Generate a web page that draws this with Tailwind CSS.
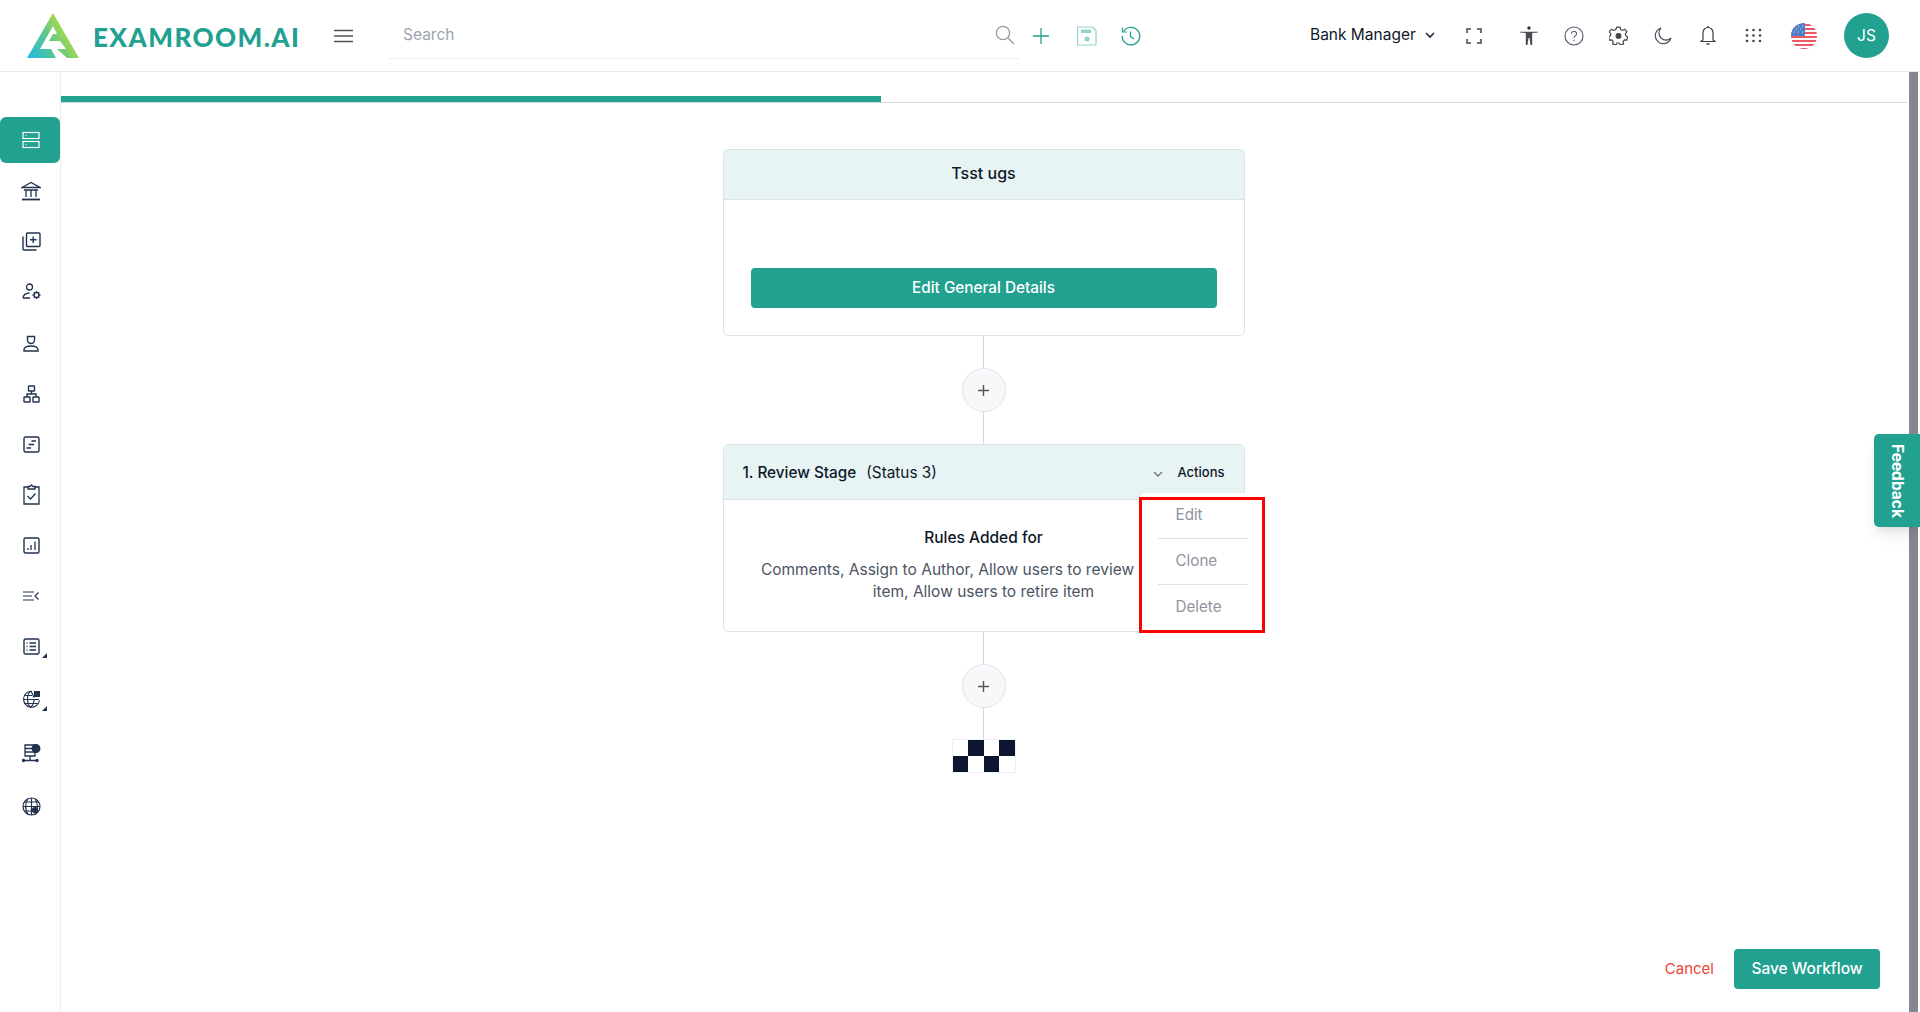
<!DOCTYPE html>
<html lang="en">
<head>
    <meta charset="UTF-8">
    <title>Workflow</title>
    <script src="https://cdn.jsdelivr.net/npm/@tailwindcss/browser@4"></script>
</head>
<body class="h-screen overflow-hidden flex flex-col bg-white font-['Inter',sans-serif] text-[#0f172a]">

    <!-- Header -->
    <header class="h-[72px] shrink-0 flex items-center pl-[27px] border-b border-[#ececec]">
        <svg class="w-[52px] h-[45px] shrink-0 -mt-[1px]" viewBox="0 0 52 45">
            <defs>
                <linearGradient id="logoGrad" x1="0" y1="1" x2="1" y2="0.45">
                    <stop offset="0" stop-color="#1fb6e6"/>
                    <stop offset="0.5" stop-color="#5cc98a"/>
                    <stop offset="1" stop-color="#cfe02a"/>
                </linearGradient>
            </defs>
            <path fill="url(#logoGrad)" d="M26 0 52 45H40L30 36H39L33 28H22L26 21H30L26 13 13 36H24L29 45H0Z"/>
        </svg>
        <span class="ml-[14px] mt-[2px] w-[206px] shrink-0 font-['Lato',sans-serif] font-black text-[26px] leading-none tracking-[1.45px] text-[#22a090] whitespace-nowrap">EXAMROOM.AI</span>
        <svg class="ml-[35px] w-[19px] h-[14px] shrink-0" viewBox="0 0 19 14" fill="none" stroke="#555" stroke-width="1.6"><path d="M0 1.5h19M0 7h19M0 12.5h19"/></svg>

        <div class="ml-[35px] w-[631px] h-[46px] shrink-0 flex items-center border-b border-[#eeeeee] pl-[15px] pr-[4px]">
            <input class="flex-1 min-w-0 text-[15.5px] outline-none placeholder:text-[#9ca3af]" placeholder="Search">
            <svg class="w-[20px] h-[20px] shrink-0 -mt-[1px]" viewBox="0 0 20 20" fill="none" stroke="#9a9aa2" stroke-width="1.3"><circle cx="8" cy="8" r="6.6"/><path d="M13 13l6 6"/></svg>
        </div>

        <svg class="ml-[14px] w-[16px] h-[16px] shrink-0" viewBox="0 0 16 16" fill="none" stroke="#22a090" stroke-width="1.3"><path d="M8 0v16M0 8h16"/></svg>
        <svg class="ml-[28px] w-[20px] h-[20px] shrink-0" viewBox="0 0 20 20" fill="none"><path d="M1.5 1h14l3.500 3.500v13.500a1 1 0 0 1-1 1h-16.500a1 1 0 0 1-1-1v-16a1 1 0 0 1 1-1z" stroke="#92d3ca" stroke-width="1.2"/><rect x="4" y="3.500" width="10" height="3.500" fill="#92d3ca"/><circle cx="10" cy="13" r="2.500" fill="#92d3ca"/></svg>
        <svg class="ml-[24px] w-[20px] h-[20px] shrink-0" viewBox="0 0 20 20" fill="none" stroke="#22a090" stroke-width="1.3"><path d="M2.500 5.500A8.800 8.800 0 1 1 1.200 10"/><path d="M1.500 1.500v4.500h4.500" stroke-width="1.2"/><path d="M9.500 5.500v5l3.500 2.500"/></svg>

        <span class="ml-[169px] -mt-[1px] w-[106px] shrink-0 text-[15.5px] whitespace-nowrap">Bank Manager</span>
        <svg class="ml-[9px] w-[10px] h-[7px] shrink-0" viewBox="0 0 10 7" fill="none" stroke="#1f2937" stroke-width="1.6"><path d="M1 1l4 4 4-4"/></svg>

        <svg class="ml-[31px] w-[16px] h-[16px] shrink-0" viewBox="0 0 16 16" fill="none" stroke="#444" stroke-width="1.5"><path d="M1 5V1h4M11 1h4v4M15 11v4h-4M5 15H1v-4"/></svg>
        <svg class="ml-[38px] w-[18px] h-[20px] shrink-0" viewBox="0 0 18 20"><circle cx="9" cy="2" r="1.700" fill="#333"/><path d="M0 5.700h18v.8l-5.800.6V19h-1.700l-1-7h-1l-1 7H5.800V7.100L0 6.500z" fill="#4a4a50"/></svg>
        <svg class="ml-[26px] w-[20px] h-[20px] shrink-0" viewBox="0 0 20 20" fill="none" stroke="#4b5563" stroke-width="1.100"><circle cx="10" cy="10" r="9"/><path d="M7.500 7.800a2.500 2.500 0 1 1 3.800 2.100c-.9.6-1.300 1-1.300 2.100"/><path d="M10 13.800v1.400"/></svg>
        <svg class="ml-[25px] w-[19px] h-[19px] shrink-0" viewBox="0 0 24 24" fill="none" stroke="#444" stroke-width="1.500"><path d="M10 1.500h4l.6 3 2.600 1.100 2.700-1.600 2.800 3.400-2 2.300.3 2.300 2.500 1.500-1 4.200-3-.2-1.700 2.100.6 3-4 1.500-1.700-2.600h-2.400l-1.700 2.600-4-1.500.6-3-1.700-2.100-3 .2-1-4.200 2.500-1.500.3-2.300-2-2.300 2.800-3.400 2.700 1.600 2.600-1.100z"/><circle cx="12" cy="12.500" r="3" fill="#444"/></svg>
        <svg class="ml-[26px] w-[18px] h-[18px] shrink-0" viewBox="0 0 18 18" fill="none" stroke="#4b5563" stroke-width="1.200"><path d="M7 1a8 8 0 1 0 10 10A7 7 0 0 1 7 1z"/></svg>
        <svg class="ml-[28px] w-[16px] h-[20px] shrink-0" viewBox="0 0 16 20" fill="none" stroke="#3f3f46" stroke-width="1.200"><path d="M8 1.500a5 5 0 0 1 5 5v7.500l2 1.500H1l2-1.500V6.500a5 5 0 0 1 5-5z"/><path d="M8 0v1.500M6.500 18h3" stroke-width="1.500"/></svg>
        <svg class="ml-[29px] w-[17px] h-[15px] shrink-0" viewBox="0 0 17 15" fill="#444"><circle cx="2" cy="2" r="1.300"/><circle cx="8.500" cy="2" r="1.300"/><circle cx="15" cy="2" r="1.300"/><circle cx="2" cy="7.500" r="1.300"/><circle cx="8.500" cy="7.500" r="1.300"/><circle cx="15" cy="7.500" r="1.300"/><circle cx="2" cy="13" r="1.300"/><circle cx="8.500" cy="13" r="1.300"/><circle cx="15" cy="13" r="1.300"/></svg>
        <svg class="ml-[29px] w-[26px] h-[26px] shrink-0" viewBox="0 0 26 26">
            <defs><clipPath id="flagClip"><circle cx="13" cy="13" r="13"/></clipPath></defs>
            <g clip-path="url(#flagClip)">
                <rect width="26" height="26" fill="#fff"/>
                <path d="M0 1h26v2H0zM0 5h26v2H0zM0 9h26v2H0zM0 13h26v2H0zM0 17h26v2H0zM0 21h26v2H0zM0 25h26v2H0z" fill="#ef5666"/>
                <rect width="14" height="13" fill="#4f7fc4"/>
            </g>
            <path d="M3 3h1M7 3h1M11 3h1M5 6h1M9 6h1M3 9h1M7 9h1M11 9h1" stroke="#dfe8f5" stroke-width="1"/>
        </svg>
        <div class="ml-[27px] w-[45px] h-[45px] shrink-0 rounded-full bg-[#22a090] text-white text-[15.5px] flex items-center justify-center">JS</div>
    </header>

    <div class="flex-1 min-h-0 flex relative">

        <!-- Sidebar -->
        <aside class="w-[61px] shrink-0 border-r border-[#ececec] pt-[45px] flex flex-col items-stretch text-[#22324f]">
            <div class="h-[46px] mb-[3px] pl-[2px] bg-[#22a090] rounded-[6px] flex items-center justify-center">
                <svg class="w-[18px] h-[18px]" viewBox="0 0 18 18" fill="none" stroke="#fff" stroke-width="1.200"><rect x="1" y="1.500" width="16" height="6"/><rect x="1" y="10.500" width="16" height="6"/><path d="M3.500 4.500h1M3.500 13.500h1"/></svg>
            </div>
            <div class="h-[50.6px] pl-[2px] flex items-center justify-center">
                <svg class="w-[20px] h-[20px]" viewBox="0 0 20 20" fill="none" stroke="currentColor" stroke-width="1.300"><path d="M1 6.500 10 1.500l9 5zM3 9h14M5 9v7M10 9v7M15 9v7"/><path d="M1 18.500h18" stroke-width="1.800"/></svg>
            </div>
            <div class="h-[50.6px] pl-[2px] flex items-center justify-center">
                <svg class="w-[19px] h-[19px]" viewBox="0 0 19 19" fill="none" stroke="currentColor" stroke-width="1.400"><rect x="4.500" y="1" width="13.500" height="13.500" rx="1"/><path d="M1 4.500V17a1 1 0 0 0 1 1h12.500M11.200 4.500v6.500M8 7.700h6.500"/></svg>
            </div>
            <div class="h-[50.6px] pl-[2px] flex items-center justify-center">
                <svg class="w-[19px] h-[18px]" viewBox="0 0 19 18" fill="none" stroke="currentColor" stroke-width="1.300"><circle cx="7.500" cy="4" r="3"/><path d="M1 15h7M1 15c0-3 3-5 6.500-5"/><circle cx="14.500" cy="12" r="2.400"/><path d="M14.500 8v1.600M14.500 14.400V16M18.500 12h-1.600M12.100 12h-1.600M11.700 9.200l1.100 1.100M16.200 13.700l1.100 1.100M17.300 9.200l-1.100 1.100M12.800 13.700l-1.100 1.100" stroke-width="1.400"/></svg>
            </div>
            <div class="h-[50.6px] pl-[2px] flex items-center justify-center">
                <svg class="w-[16px] h-[17px]" viewBox="0 0 16 17" fill="none" stroke="currentColor" stroke-width="1.400"><path d="M4.500 1.500h7v3.500a3.500 3.500 0 0 1-7 0z"/><path d="M1 16h14v-1c0-2.500-2.500-4-7-4s-7 1.500-7 4z"/></svg>
            </div>
            <div class="h-[50.6px] pl-[2px] flex items-center justify-center">
                <svg class="w-[17px] h-[18px]" viewBox="0 0 17 18" fill="none" stroke="currentColor" stroke-width="1.400"><rect x="5.500" y="1" width="6" height="5" rx=".6"/><rect x="1" y="12" width="6" height="5" rx=".6"/><rect x="10" y="12" width="6" height="5" rx=".6"/><path d="M8.500 6v3M4 12V9h9v3"/></svg>
            </div>
            <div class="h-[50.6px] pl-[2px] flex items-center justify-center">
                <svg class="w-[17px] h-[17px]" viewBox="0 0 17 17" fill="none" stroke="currentColor" stroke-width="1.400"><rect x="1" y="1" width="15" height="15" rx="1.500"/><path d="M8.500 5H13M5.500 8.500H11M3.500 12H8" stroke-width="1.300"/></svg>
            </div>
            <div class="h-[50.6px] pl-[2px] flex items-center justify-center">
                <svg class="w-[17px] h-[21px]" viewBox="0 0 17 21" fill="none" stroke="currentColor" stroke-width="1.300"><path d="M5 3H1v17h15V3h-4"/><path d="M5 5V2.500h2L8.500 1 10 2.500h2V5z"/><path d="M4.500 12l3 3 5-5.500"/></svg>
            </div>
            <div class="h-[50.6px] pl-[2px] flex items-center justify-center">
                <svg class="w-[17px] h-[17px]" viewBox="0 0 17 17" fill="none" stroke="currentColor" stroke-width="1.400"><rect x="1" y="1" width="15" height="15" rx="1.500"/><path d="M5 11v2M8 8v5M12 4.500V13" stroke-width="1.300"/></svg>
            </div>
            <div class="h-[50.6px] pl-[2px] flex items-center justify-center">
                <svg class="w-[16px] h-[10px]" viewBox="0 0 16 10" fill="none" stroke="currentColor" stroke-width="1.200"><path d="M0 1h11M0 5h9M0 9h11M15.500 1.500 12 5l3.500 3.500"/></svg>
            </div>
            <div class="h-[50.6px] pl-[2px] relative flex items-center justify-center">
                <svg class="w-[17px] h-[17px]" viewBox="0 0 17 17" fill="none" stroke="currentColor" stroke-width="1.400"><rect x="1" y="1" width="15" height="15" rx="1.500"/><path d="M6.500 5H13M6.500 8.500H13M6.500 12H13M3.500 5h1M3.500 8.500h1M3.500 12h1"/></svg>
                <span class="absolute left-[42px] top-[32px] w-0 h-0 border-l-[5px] border-l-transparent border-b-[5px] border-b-[#22324f]"></span>
            </div>
            <div class="h-[55px] pl-[2px] relative flex items-center justify-center">
                <svg class="w-[19px] h-[19px]" viewBox="0 0 19 19" fill="none" stroke="currentColor" stroke-width="1.100"><path d="M10 1.200a8 8 0 1 0 7.500 9"/><path d="M8.500 1.200c-4 4-4 12 0 16.500M8.500 1.200c2 2 3 4 3.300 6.500M8.500 17.700c2-2 3.500-4.500 3.700-8M1 9.500h16M2 5.500h8M2 13.500h14"/><rect x="12" y="1" width="6" height="6" fill="currentColor" stroke="none"/></svg>
                <span class="absolute left-[42px] top-[34px] w-0 h-0 border-l-[5px] border-l-transparent border-b-[5px] border-b-[#22324f]"></span>
            </div>
            <div class="h-[53px] pl-[2px] flex items-center justify-center">
                <svg class="w-[19px] h-[19px]" viewBox="0 0 19 19" fill="none" stroke="currentColor" stroke-width="1.300"><path d="M3 1h10v11H3zM3 4.500h10M3 8h10"/><circle cx="14" cy="4.500" r="3.800" fill="currentColor"/><path d="M8 12v4M1 16.500h14" /><circle cx="1.500" cy="16.500" r="1" fill="currentColor"/><circle cx="15" cy="16.500" r="1" fill="currentColor"/></svg>
            </div>
            <div class="h-[54px] pl-[2px] flex items-center justify-center">
                <svg class="w-[19px] h-[19px]" viewBox="0 0 19 19" fill="none" stroke="currentColor" stroke-width="1.200"><circle cx="9.500" cy="9.500" r="8.500"/><path d="M1 9.500h17M2.500 5h14M2.500 14h14M9.500 1v17M6 1.500c-3 5-3 11 0 16M13 1.500c3 5 3 11 0 16"/><circle cx="13" cy="13" r="2.500" fill="currentColor"/></svg>
            </div>
        </aside>

        <!-- Main -->
        <main class="flex-1 min-w-0 flex flex-col">
            <div class="mt-[24px] mr-[2px] h-[7px] border-b border-[#d5d7de]">
                <div class="w-[820px] h-[6px] bg-[#22a090]"></div>
            </div>

            <div class="mt-[46px] pr-[3px] flex flex-col items-center">
                <section class="w-[522px] h-[187px] border border-[#dde1e8] rounded-[5px] overflow-hidden">
                    <div class="h-[50px] pb-[3px] bg-[#e8f4f4] border-b border-[#dde1e8] flex items-center justify-center text-base font-medium">Tsst ugs</div>
                    <div class="px-[27px] pt-[68px]">
                        <button class="w-full h-[40px] bg-[#22a090] text-white text-[15.3px] font-medium rounded-[4px]">Edit General Details</button>
                    </div>
                </section>

                <div class="w-px h-[32px] bg-[#d5d7de]"></div>
                <div class="w-[44px] h-[44px] rounded-full border border-[#e2e4ea] bg-[#f7f8fa] flex items-center justify-center">
                    <svg class="w-[11px] h-[11px]" viewBox="0 0 11 11" stroke="#555" stroke-width="1.400"><path d="M5.500 0v11M0 5.500h11"/></svg>
                </div>
                <div class="w-px h-[32px] bg-[#d5d7de]"></div>

                <section class="relative w-[522px] h-[188px] border border-[#dde1e8] rounded-[5px]">
                    <div class="h-[55px] pt-[2px] bg-[#e8f4f4] border-b border-[#dde1e8] rounded-t-[5px] flex items-center px-[19px] text-[15.3px] font-medium">
                        <span>1. Review Stage</span>
                        <span class="ml-[10px] font-normal">(Status 3)</span>
                        <svg class="ml-auto w-[10px] h-[7px] mt-[2px]" viewBox="0 0 10 7" fill="none" stroke="#6b7280" stroke-width="1.300"><path d="M1 1l4 4 4-4"/></svg>
                        <span class="ml-[15px] text-[13px] font-medium">Actions</span>
                    </div>
                    <div class="pt-[27px] text-center">
                        <p class="text-[15.5px] font-medium leading-[22px]">Rules Added for</p>
                        <p class="mt-[10px] text-[15.5px] leading-[22px] text-[#4b5563]"><span class="inline-block whitespace-nowrap pr-[72px]">Comments, Assign to Author, Allow users to review</span><br>item, Allow users to retire item</p>
                    </div>

                    <!-- Actions menu -->
                    <div class="absolute left-[416px] top-[48px] w-[126px] h-[141px] bg-white rounded-tl-[6px] text-[15.2px] text-[#8f939e]">
                        <div class="mx-[18px] pl-[18px] h-[46px] flex items-center border-b border-[#dde1e8]">Edit</div>
                        <div class="mx-[18px] pl-[18px] h-[46px] flex items-center border-b border-[#dde1e8]">Clone</div>
                        <div class="mx-[18px] pl-[18px] h-[45px] flex items-center">Delete</div>
                    </div>
                    <div class="absolute left-[415px] top-[52px] w-[126px] h-[136px] border-[3px] border-[#ff0000] pointer-events-none"></div>
                </section>

                <div class="w-px h-[32px] bg-[#d5d7de]"></div>
                <div class="w-[44px] h-[44px] rounded-full border border-[#e2e4ea] bg-[#f7f8fa] flex items-center justify-center">
                    <svg class="w-[11px] h-[11px]" viewBox="0 0 11 11" stroke="#555" stroke-width="1.400"><path d="M5.500 0v11M0 5.500h11"/></svg>
                </div>
                <div class="w-px h-[31px] bg-[#d5d7de]"></div>

                <!-- Finish flag -->
                <div class="w-[64px] h-[34px] grid grid-cols-4 grid-rows-2 border border-[#eef0f4]">
                    <div class="bg-white"></div><div class="bg-[#0d1530]"></div><div class="bg-white"></div><div class="bg-[#0d1530]"></div>
                    <div class="bg-[#0d1530]"></div><div class="bg-white"></div><div class="bg-[#0d1530]"></div><div class="bg-white"></div>
                </div>
            </div>

            <div class="mt-auto mb-[23px] pr-[29px] flex items-center justify-end">
                <button class="mt-[1px] text-[15px] text-[#f04438]">Cancel</button>
                <button class="ml-[20px] w-[146px] h-[40px] bg-[#22a090] text-white text-[15.5px] font-medium rounded-[4px]">Save Workflow</button>
            </div>
        </main>

        <!-- Scrollbar -->
        <div class="w-[9px] mr-[2px] shrink-0 bg-[#868692]"></div>

        <!-- Feedback tab -->
        <div class="absolute right-0 top-[362px] w-[46px] h-[93px] bg-[#22a090] rounded-l-[5px] shadow-lg flex items-center justify-center text-white text-[15.5px] font-bold [writing-mode:vertical-rl]">Feedback</div>
    </div>
</body>
</html>
